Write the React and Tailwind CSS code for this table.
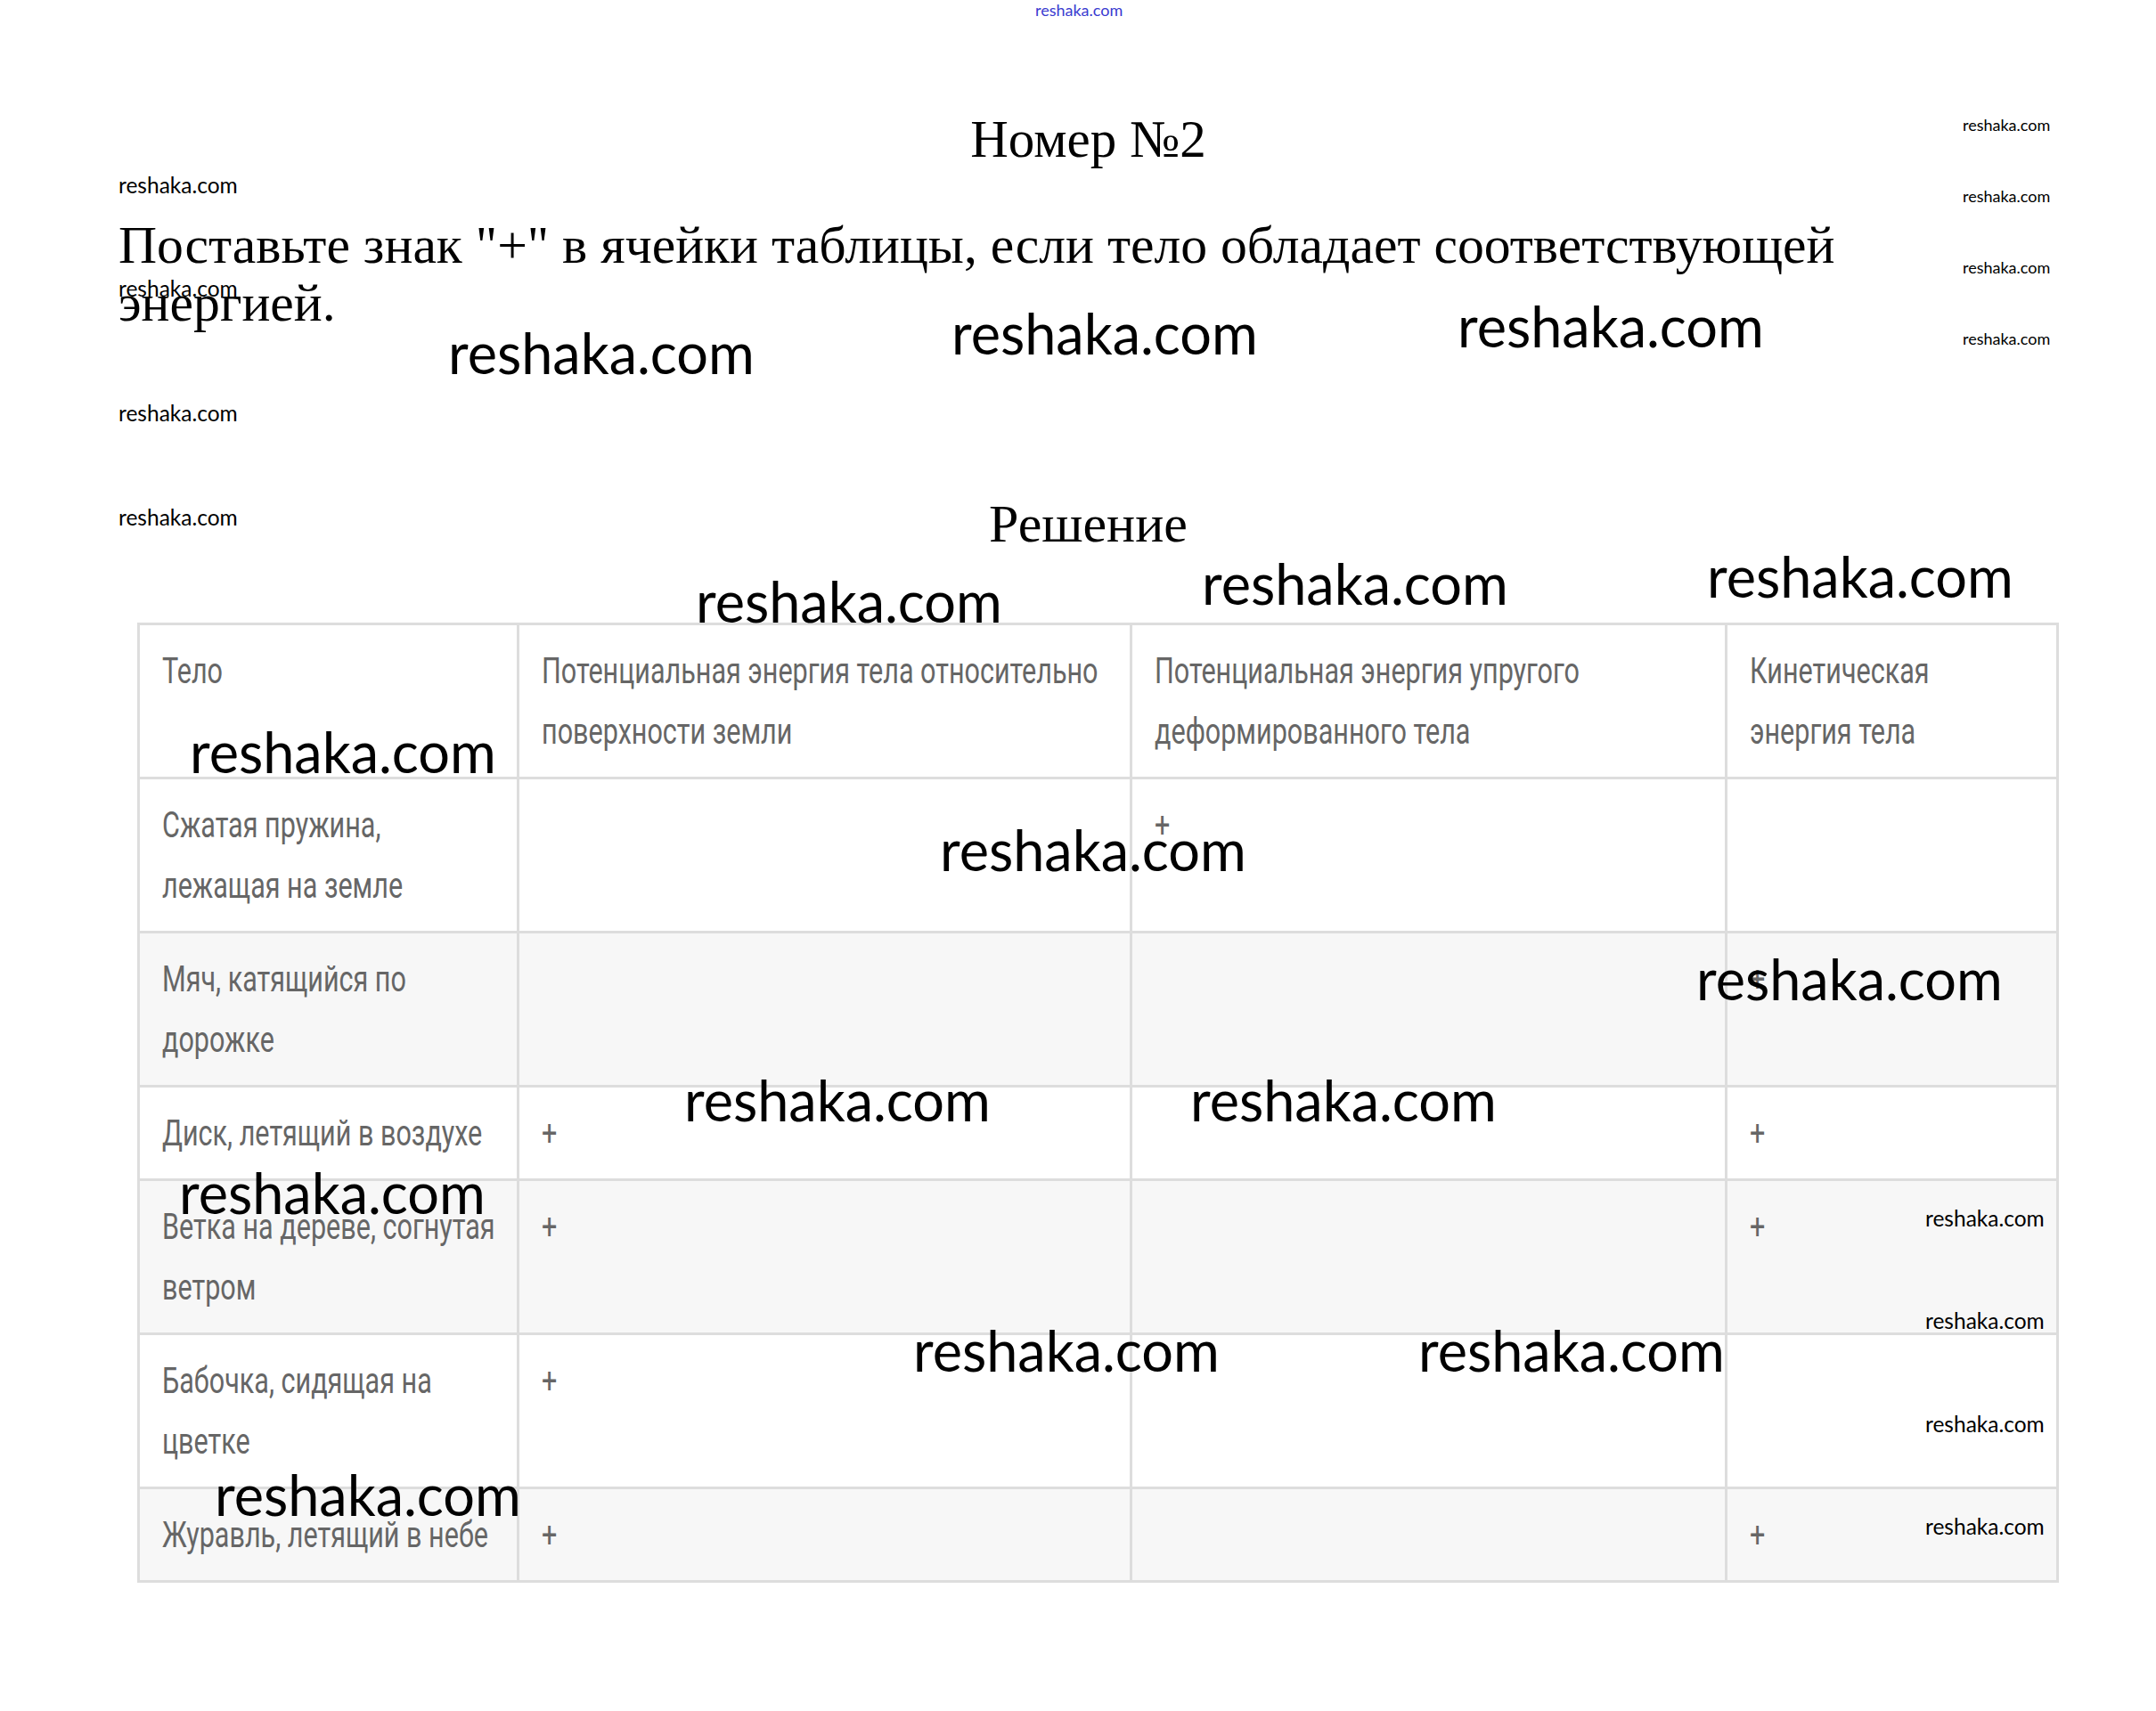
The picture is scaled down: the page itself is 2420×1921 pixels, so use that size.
import React from 'react';

// watermark overlays: big ones scattered over the page, small ones in the margins
const bigMarks = [
    'left-[503px] top-[364px]',
    'left-[1068px] top-[342px]',
    'left-[1636px] top-[334px]',
    'left-[781px] top-[643px]',
    'left-[1349px] top-[623px]',
    'left-[1916px] top-[615px]',
    'left-[213px] top-[812px]',
    'left-[1055px] top-[922px]',
    'left-[1904px] top-[1067px]',
    'left-[768px] top-[1203px]',
    'left-[1336px] top-[1203px]',
    'left-[201px] top-[1307px]',
    'left-[1025px] top-[1484px]',
    'left-[1592px] top-[1484px]',
    'left-[241px] top-[1646px]',
];

const smallMarks = [
    'left-[133px] top-[196px]',
    'left-[133px] top-[312px]',
    'left-[133px] top-[452px]',
    'left-[133px] top-[569px]',
    'left-[2161px] top-[1356px]',
    'left-[2161px] top-[1471px]',
    'left-[2161px] top-[1587px]',
    'left-[2161px] top-[1702px]',
];

const tinyMarks = [
    'left-[2203px] top-[131px]',
    'left-[2203px] top-[211px]',
    'left-[2203px] top-[291px]',
    'left-[2203px] top-[371px]',
];

const header = [
    ['Тело'],
    ['Потенциальная энергия тела относительно', 'поверхности земли'],
    ['Потенциальная энергия упругого', 'деформированного тела'],
    ['Кинетическая', 'энергия тела'],
];

const rows = [
    { name: ['Сжатая пружина,', 'лежащая на земле'], marks: [false, true, false] },
    { name: ['Мяч, катящийся по', 'дорожке'], marks: [false, false, true] },
    { name: ['Диск, летящий в воздухе'], marks: [true, false, true] },
    { name: ['Ветка на дереве, согнутая', 'ветром'], marks: [true, false, true] },
    { name: ['Бабочка, сидящая на', 'цветке'], marks: [true, false, false] },
    { name: ['Журавль, летящий в небе'], marks: [true, false, true] },
];

const Cell = ({ lines }) => (
    <td className="border-[3px] border-[#dddddd] pl-[25px] pr-2 py-[17px] align-top">
        <div className="origin-left scale-x-[0.745] whitespace-nowrap">
            {lines.map((line, i) => (
                <div key={i}>{line}</div>
            ))}
        </div>
    </td>
);

const App = () => {
    return (
        <div className="relative w-[2420px] min-h-[1921px] overflow-hidden bg-white text-black">
            <div className="pl-[133px] pr-[110px] pt-[123px]">
                <h1 className="text-center font-['Liberation_Serif',serif] text-[59px] leading-[66px] font-normal">
                    Номер №2
                </h1>
                <p className="mt-[54px] font-['Liberation_Serif',serif] text-[59.7px] leading-[65px]">
                    <span className="whitespace-nowrap">Поставьте знак "+" в ячейки таблицы, если тело обладает соответствующей</span>
                    <br />
                    энергией.
                </p>
                <h2 className="mt-[182px] text-center font-['Liberation_Serif',serif] text-[60px] leading-[66px] font-normal">
                    Решение
                </h2>

                <table className="mt-[78px] ml-[21px] w-[2154px] table-fixed border-collapse border-[3px] border-[#dddddd] font-['Roboto',sans-serif] text-[41px] leading-[68px] text-[#666666]">
                    <colgroup>
                        <col className="w-[426px]" />
                        <col className="w-[688px]" />
                        <col className="w-[668px]" />
                        <col className="w-[372px]" />
                    </colgroup>
                    <thead>
                        <tr className="bg-white">
                            {header.map((lines, i) => (
                                <Cell key={i} lines={lines} />
                            ))}
                        </tr>
                    </thead>
                    <tbody>
                        {rows.map((row, i) => (
                            <tr key={i} className={i % 2 === 1 ? 'bg-[#f7f7f7]' : 'bg-white'}>
                                <Cell lines={row.name} />
                                {row.marks.map((m, j) => (
                                    <Cell key={j} lines={m ? ['+'] : ['']} />
                                ))}
                            </tr>
                        ))}
                    </tbody>
                </table>
            </div>

            {/* watermarks */}
            <div className="absolute left-[1162px] top-[2px] font-['Lato',sans-serif] text-[18px] leading-none text-[#3b3bd0]">
                reshaka.com
            </div>
            {bigMarks.map((pos, i) => (
                <div key={i} className={`absolute ${pos} font-['Lato',sans-serif] text-[63px] leading-none text-black`}>
                    reshaka.com
                </div>
            ))}
            {smallMarks.map((pos, i) => (
                <div key={i} className={`absolute ${pos} font-['Lato',sans-serif] text-[24.5px] leading-none text-black`}>
                    reshaka.com
                </div>
            ))}
            {tinyMarks.map((pos, i) => (
                <div key={i} className={`absolute ${pos} font-['Lato',sans-serif] text-[18px] leading-none text-black`}>
                    reshaka.com
                </div>
            ))}
        </div>
    );
};

export default App;
